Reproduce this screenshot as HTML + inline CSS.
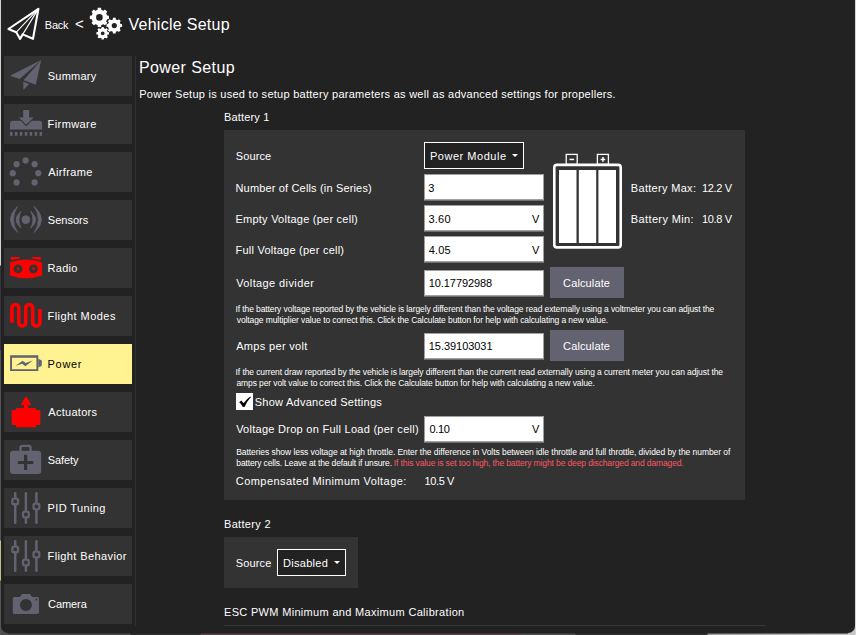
<!DOCTYPE html>
<html><head><meta charset="utf-8"><title>Vehicle Setup - Power</title>
<style>
html,body{margin:0;padding:0;}
body{width:856px;height:635px;overflow:hidden;background:linear-gradient(90deg,#4c4c4c 0,#4c4c4c 130px,#2c2c2c 131px,#2c2c2c 200px,#58464a 201px,#58464a 520px,#505050 521px,#505050 575px,#2c2c2c 576px,#2c2c2c 707px,#9a9a9a 708px,#c4c4c4 850px);position:relative;font:11px/12px "Liberation Sans",sans-serif;color:#fff;}
#edgeL{position:absolute;left:0;top:0;width:1px;height:635px;background:linear-gradient(180deg,#d2d0d2 0,#d2d0d2 265px,#3a3242 266px,#3a3242 350px,#555 351px,#555 540px,#c8c088 541px,#c8c088 580px,#555 581px,#555 635px);}
#edgeR{position:absolute;left:855px;top:0;width:1px;height:635px;background:#d6d6d6;}
#win{position:absolute;left:1px;top:0;width:854px;height:633px;background:#222;border-radius:0 0 7px 7px;overflow:hidden;}
#app{position:absolute;left:-1px;top:0;width:856px;height:635px;}
.t{position:absolute;white-space:pre;line-height:12px;}
.sb{position:absolute;left:4px;width:128px;height:40px;background:#333;}
.sb.sel{background:#fff291;}
.sb svg{position:absolute;left:0;top:0;display:block;}
.abs{position:absolute;}
.panel{position:absolute;background:#333;}
.inp{position:absolute;left:424px;width:118px;height:24px;background:#fff;border:1px solid #a0a0a0;box-shadow:0 1px 0 #707070;}
.combo{position:absolute;box-sizing:border-box;border:1px solid #fff;background:#222;}
.cbtn{position:absolute;left:550px;width:74px;height:31px;background:#626270;}
.arrow{position:absolute;width:0;height:0;border-left:3.3px solid transparent;border-right:3.3px solid transparent;border-top:3.4px solid #fff;}
</style></head><body>
<div id="edgeL"></div><div id="edgeR"></div>
<div id="win"><div id="app">
<!-- header icons -->
<svg class="abs" style="left:0;top:0" width="130" height="48" viewBox="0 0 130 48">
<g fill="none" stroke="#fff" stroke-linejoin="miter">
<path d="M38.4 8.9 L8.4 29 L16.3 32.2 L20.1 38.9 L22.7 34.4 L33 38.8Z" stroke-width="2.1" stroke-linejoin="round"/>
<path d="M38.4 8.9 L16.3 32.2 M38.4 8.9 L22.7 34.4" stroke-width="1.1"/>
</g>
<g fill="#fff" fill-rule="evenodd"><path d="M101.24 25.08 L101.07 26.96 L97.73 26.96 L97.56 25.08 L95.27 24.14 L93.82 25.34 L91.46 22.98 L92.66 21.53 L91.72 19.24 L89.84 19.07 L89.84 15.73 L91.72 15.56 L92.66 13.27 L91.46 11.82 L93.82 9.46 L95.27 10.66 L97.56 9.72 L97.73 7.84 L101.07 7.84 L101.24 9.72 L103.53 10.66 L104.98 9.46 L107.34 11.82 L106.14 13.27 L107.08 15.56 L108.96 15.73 L108.96 19.07 L107.08 19.24 L106.14 21.53 L107.34 22.98 L104.98 25.34 L103.53 24.14Z M96.10 17.40 a3.3 3.3 0 1 0 6.6 0 a3.3 3.3 0 1 0 -6.6 0Z"/><path d="M115.79 31.82 L115.66 33.38 L112.94 33.38 L112.81 31.82 L110.96 31.06 L109.76 32.06 L107.84 30.14 L108.84 28.94 L108.08 27.09 L106.52 26.96 L106.52 24.24 L108.08 24.11 L108.84 22.26 L107.84 21.06 L109.76 19.14 L110.96 20.14 L112.81 19.38 L112.94 17.82 L115.66 17.82 L115.79 19.38 L117.64 20.14 L118.84 19.14 L120.76 21.06 L119.76 22.26 L120.52 24.11 L122.08 24.24 L122.08 26.96 L120.52 27.09 L119.76 28.94 L120.76 30.14 L118.84 32.06 L117.64 31.06Z M111.70 25.60 a2.6 2.6 0 1 0 5.2 0 a2.6 2.6 0 1 0 -5.2 0Z"/><path d="M103.89 38.26 L103.80 39.60 L101.60 39.60 L101.51 38.26 L100.04 37.65 L99.02 38.54 L97.46 36.98 L98.35 35.96 L97.74 34.49 L96.40 34.40 L96.40 32.20 L97.74 32.11 L98.35 30.64 L97.46 29.62 L99.02 28.06 L100.04 28.95 L101.51 28.34 L101.60 27.00 L103.80 27.00 L103.89 28.34 L105.36 28.95 L106.38 28.06 L107.94 29.62 L107.05 30.64 L107.66 32.11 L109.00 32.20 L109.00 34.40 L107.66 34.49 L107.05 35.96 L107.94 36.98 L106.38 38.54 L105.36 37.65Z M100.80 33.30 a1.9 1.9 0 1 0 3.8 0 a1.9 1.9 0 1 0 -3.8 0Z"/></g>
</svg>
<!-- sidebar -->
<div class="sb" style="top:56px"><svg width="44" height="40" viewBox="0 0 44 40"><g fill="#626270"><path d="M6 19.8 L37.2 4.1 L15.7 23Z"/><path d="M37.2 4.1 L19.5 24.3 L31.8 28.7Z"/><path d="M19.2 25.8 L25.2 28 L19.5 33.7Z"/></g></svg></div>
<div class="sb" style="top:104px"><svg width="44" height="40" viewBox="0 0 44 40"><g fill="#626270"><path d="M6 25.5 V19.7 a3 3 0 0 1 3 -3 H16.6 L22.2 22.3 L27.8 16.7 H35.1 a3 3 0 0 1 3 3 V25.5Z"/><path d="M19.2 6 H25.2 V13.4 H29.6 L22.2 20.8 L14.8 13.4 H19.2Z"/><rect x="6.00" y="28" width="2.5" height="3.8"/><rect x="10.93" y="28" width="2.5" height="3.8"/><rect x="15.86" y="28" width="2.5" height="3.8"/><rect x="20.79" y="28" width="2.5" height="3.8"/><rect x="25.72" y="28" width="2.5" height="3.8"/><rect x="30.65" y="28" width="2.5" height="3.8"/><rect x="35.58" y="28" width="2.5" height="3.8"/></g></svg></div>
<div class="sb" style="top:152px"><svg width="44" height="40" viewBox="0 0 44 40"><g fill="#626270"><circle cx="21.6" cy="8.4" r="3.1"/><circle cx="30.6" cy="12.2" r="3.1"/><circle cx="34.3" cy="21.2" r="3.1"/><circle cx="30.6" cy="30.4" r="3.1"/><circle cx="12.6" cy="30.4" r="3.1"/><circle cx="8.8" cy="21.2" r="3.1"/><circle cx="12.6" cy="12.2" r="3.1"/></g></svg></div>
<div class="sb" style="top:200px"><svg width="44" height="40" viewBox="0 0 44 40"><g fill="#626270" stroke="#626270" stroke-width="0.7" stroke-linejoin="round"><circle cx="21.9" cy="19.7" r="4" /><path d="M17.0 11.2 Q7.20 19.65 17.0 28.1 Q12.80 19.65 17.0 11.2Z"/><path d="M13.6 6.4 Q-1.00 19.45 13.6 32.5 Q5.60 19.45 13.6 6.4Z"/><path d="M26.8 11.2 Q36.60 19.65 26.8 28.1 Q31.00 19.65 26.8 11.2Z"/><path d="M30.2 6.4 Q44.80 19.45 30.2 32.5 Q38.20 19.45 30.2 6.4Z"/></g></svg></div>
<div class="sb" style="top:248px"><svg width="44" height="40" viewBox="0 0 44 40"><g fill="#f00"><path d="M6 14.2 Q22 8.6 38.1 14.2 V27.4 Q22 33 6 27.4Z"/><path d="M6.9 9 H15.7 V10.5 Q11 11 6.9 12.2Z"/><path d="M36.7 9 H27.7 V10.5 Q32.5 11 36.7 12.2Z"/><circle cx="14" cy="20.8" r="4.4" fill="#333"/><circle cx="29.4" cy="20.8" r="4.4" fill="#333"/><circle cx="14" cy="20.8" r="1.25"/><circle cx="29.4" cy="20.8" r="1.25"/></g></svg></div>
<div class="sb" style="top:296px"><svg width="44" height="40" viewBox="0 0 44 40"><path fill="none" stroke="#f00" stroke-width="3.6" d="M7.9 26.8 V12 a3.45 3.45 0 0 1 6.9 0 V26.5 a3.45 3.45 0 0 0 6.9 0 V12 a3.5 3.5 0 0 1 7 0 V26.5 a3.6 3.6 0 0 0 7.2 0 V12.9"/></svg></div>
<div class="sb sel" style="top:344px"><svg width="44" height="40" viewBox="0 0 44 40"><g fill="#626270"><path fill-rule="evenodd" d="M6.1 11.2 H34.3 V27 H6.1Z M8 13.7 V25.2 H32.4 V13.7Z"/><path d="M34.3 14.8 L37.8 16.5 V21.7 L34.3 23.4Z"/><path d="M11.7 21.7 L18.6 16.7 L21.7 18.9 L28.7 16.5 L21.4 22.2 L18.3 19.8Z"/></g></svg></div>
<div class="sb" style="top:392px"><svg width="44" height="40" viewBox="0 0 44 40"><g fill="#f00"><rect x="7.6" y="18.1" width="28.8" height="14.8"/><rect x="12" y="16.1" width="20.1" height="19.2"/><rect x="20" y="12" width="4.1" height="5"/><path d="M22 4.8 Q22.9 4.8 23.4 5.9 L27.4 13.2 H16.7 L20.7 5.9 Q21.2 4.8 22 4.8Z"/></g></svg></div>
<div class="sb" style="top:440px"><svg width="44" height="40" viewBox="0 0 44 40"><g><rect x="6" y="10.7" width="31.2" height="23.3" rx="3.2" fill="#626270"/><path d="M16.5 11 V7.9 a2 2 0 0 1 2 -2 H24.6 a2 2 0 0 1 2 2 V11" fill="none" stroke="#626270" stroke-width="2.3"/><rect x="13.9" y="21.1" width="15.4" height="2.9" fill="#333"/><rect x="20" y="14.8" width="3.2" height="15.1" fill="#333"/></g></svg></div>
<div class="sb" style="top:488px"><svg width="44" height="40" viewBox="0 0 44 40"><g stroke="#626270" fill="#333"><line x1="11.2" y1="5.3" x2="11.2" y2="34.7" stroke-width="2.5" stroke-linecap="round"/><rect x="8.35" y="10.55" width="5.7" height="5.7" rx="1.6" stroke-width="2.3"/><line x1="21.9" y1="5.3" x2="21.9" y2="34.7" stroke-width="2.5" stroke-linecap="round"/><rect x="19.049999999999997" y="23.65" width="5.7" height="5.7" rx="1.6" stroke-width="2.3"/><line x1="32.4" y1="5.3" x2="32.4" y2="34.7" stroke-width="2.5" stroke-linecap="round"/><rect x="29.549999999999997" y="15.65" width="5.7" height="5.7" rx="1.6" stroke-width="2.3"/></g></svg></div>
<div class="sb" style="top:536px"><svg width="44" height="40" viewBox="0 0 44 40"><g stroke="#626270" fill="#333"><line x1="11.2" y1="5.3" x2="11.2" y2="34.7" stroke-width="2.5" stroke-linecap="round"/><rect x="8.35" y="10.55" width="5.7" height="5.7" rx="1.6" stroke-width="2.3"/><line x1="21.9" y1="5.3" x2="21.9" y2="34.7" stroke-width="2.5" stroke-linecap="round"/><rect x="19.049999999999997" y="23.65" width="5.7" height="5.7" rx="1.6" stroke-width="2.3"/><line x1="32.4" y1="5.3" x2="32.4" y2="34.7" stroke-width="2.5" stroke-linecap="round"/><rect x="29.549999999999997" y="15.65" width="5.7" height="5.7" rx="1.6" stroke-width="2.3"/></g></svg></div>
<div class="sb" style="top:584px"><svg width="44" height="40" viewBox="0 0 44 40"><g fill="#626270"><rect x="8.8" y="12.9" width="26.2" height="17" rx="1.6"/><path d="M15.4 13.2 L18.3 10 H25.8 L28.6 13.2Z"/><circle cx="21.9" cy="21" r="6" fill="#333"/><circle cx="32.4" cy="15.4" r="1" fill="#333"/></g></svg></div>
<div class="abs" style="left:135px;top:56px;width:1px;height:570px;background:#303030"></div>
<!-- panels -->
<div class="panel" style="left:224px;top:130px;width:521px;height:370px"></div>
<div class="panel" style="left:224px;top:537px;width:134px;height:51px"></div>
<div class="abs" style="left:224px;top:625px;width:542px;height:1px;background:#363636"></div>
<!-- controls -->
<div class="combo" style="left:424px;top:142px;width:100px;height:27px"></div>
<div class="arrow" style="left:511.7px;top:154.2px"></div>
<div class="inp" style="top:174px"></div>
<div class="inp" style="top:205px"></div>
<div class="inp" style="top:236px"></div>
<div class="inp" style="top:270px"></div>
<div class="inp" style="top:333px"></div>
<div class="inp" style="top:416px"></div>
<div class="cbtn" style="top:267px"></div>
<div class="cbtn" style="top:330px"></div>
<div class="combo" style="left:277px;top:549px;width:69px;height:27px"></div>
<div class="arrow" style="left:333.6px;top:561.2px"></div>
<!-- checkbox -->
<div class="abs" style="left:236px;top:393px;width:17px;height:17px;background:#fff"></div>
<svg class="abs" style="left:236px;top:393px" width="17" height="17" viewBox="0 0 17 17"><path d="M3.2 9.2 L5.2 7.6 L7.6 10.2 Q10.6 5.8 14.3 3.4 L14.9 4.1 Q11.2 8.2 8.5 13.9 L7 13.9 Q5.6 11.2 3.2 9.2Z" fill="#000"/></svg>
<!-- battery graphic -->
<svg class="abs" style="left:545px;top:148px" width="85" height="106" viewBox="545 148 85 106">
<rect x="554.3" y="164.9" width="66.4" height="82.5" rx="2.6" fill="none" stroke="#fff" stroke-width="2.6"/>
<rect x="559" y="170" width="17.5" height="73" fill="#fff"/><rect x="578.8" y="170" width="17.4" height="73" fill="#fff"/><rect x="598.4" y="170" width="17.6" height="73" fill="#fff"/>
<rect x="566.2" y="154.4" width="11" height="10" fill="none" stroke="#fff" stroke-width="1.3"/>
<rect x="597.4" y="154.4" width="11" height="10" fill="none" stroke="#fff" stroke-width="1.3"/>
<rect x="569.5" y="158.7" width="4.6" height="1.5" fill="#fff"/>
<rect x="600.6" y="158.7" width="4.6" height="1.5" fill="#fff"/><rect x="602.2" y="157" width="1.5" height="4.8" fill="#fff"/>
</svg>
<!-- texts -->
<span class="t" id="t0" style="left:44.81px;top:19.00px;letter-spacing:-0.213px;">Back</span>
<span class="t" id="t1" style="left:74.64px;top:15.00px;font-size:16px;line-height:17px;transform:scale(0.94,0.97);transform-origin:0 70%;">&lt;</span>
<span class="t" id="t2" style="left:128.43px;top:16.00px;font-size:16px;line-height:17px;letter-spacing:0.283px;">Vehicle Setup</span>
<span class="t" id="t3" style="left:47.82px;top:70.00px;letter-spacing:0.214px;">Summary</span>
<span class="t" id="t4" style="left:47.59px;top:118.00px;letter-spacing:0.414px;">Firmware</span>
<span class="t" id="t5" style="left:48.30px;top:166.00px;letter-spacing:0.353px;">Airframe</span>
<span class="t" id="t6" style="left:47.82px;top:214.00px;letter-spacing:0.014px;">Sensors</span>
<span class="t" id="t7" style="left:47.59px;top:262.00px;letter-spacing:0.252px;">Radio</span>
<span class="t" id="t8" style="left:47.59px;top:310.00px;letter-spacing:0.440px;">Flight Modes</span>
<span class="t" id="t9" style="left:47.58px;top:358.00px;letter-spacing:0.676px;color:#000;">Power</span>
<span class="t" id="t10" style="left:48.30px;top:406.00px;letter-spacing:0.280px;">Actuators</span>
<span class="t" id="t11" style="left:47.81px;top:454.00px;letter-spacing:-0.085px;">Safety</span>
<span class="t" id="t12" style="left:47.59px;top:502.00px;letter-spacing:0.369px;">PID Tuning</span>
<span class="t" id="t13" style="left:47.59px;top:550.00px;letter-spacing:0.388px;">Flight Behavior</span>
<span class="t" id="t14" style="left:48.00px;top:598.00px;letter-spacing:-0.068px;">Camera</span>
<span class="t" id="t15" style="left:138.88px;top:59.00px;font-size:16px;line-height:17px;letter-spacing:0.420px;">Power Setup</span>
<span class="t" id="t16" style="left:139.26px;top:88.00px;letter-spacing:0.269px;">Power Setup is used to setup battery parameters as well as advanced settings for propellers.</span>
<span class="t" id="t17" style="left:223.98px;top:111.00px;letter-spacing:0.159px;">Battery 1</span>
<span class="t" id="t18" style="left:235.79px;top:150.00px;letter-spacing:0.105px;">Source</span>
<span class="t" id="t19" style="left:235.50px;top:182.00px;letter-spacing:0.161px;">Number of Cells (in Series)</span>
<span class="t" id="t20" style="left:235.48px;top:213.00px;letter-spacing:0.239px;">Empty Voltage (per cell)</span>
<span class="t" id="t21" style="left:235.48px;top:244.00px;letter-spacing:0.238px;">Full Voltage (per cell)</span>
<span class="t" id="t22" style="left:236.17px;top:277.00px;letter-spacing:0.397px;">Voltage divider</span>
<span class="t" id="t23" style="left:236.19px;top:340.00px;letter-spacing:0.326px;">Amps per volt</span>
<span class="t" id="t24" style="left:254.77px;top:396.00px;letter-spacing:0.253px;">Show Advanced Settings</span>
<span class="t" id="t25" style="left:236.13px;top:423.00px;letter-spacing:0.270px;">Voltage Drop on Full Load (per cell)</span>
<span class="t" id="t26" style="left:235.86px;top:474.50px;letter-spacing:0.424px;">Compensated Minimum Voltage:</span>
<span class="t" id="t27" style="left:424.45px;top:474.50px;letter-spacing:-0.357px;">10.5 V</span>
<span class="t" id="t28" style="left:223.98px;top:518.00px;letter-spacing:0.321px;">Battery 2</span>
<span class="t" id="t29" style="left:235.82px;top:557.00px;letter-spacing:0.125px;">Source</span>
<span class="t" id="t30" style="left:223.98px;top:606.00px;letter-spacing:0.322px;">ESC PWM Minimum and Maximum Calibration</span>
<span class="t" id="t31" style="left:429.98px;top:150.00px;letter-spacing:0.527px;">Power Module</span>
<span class="t" id="t32" style="left:282.99px;top:557.00px;letter-spacing:0.287px;">Disabled</span>
<span class="t" id="t33" style="left:428.18px;top:182.00px;letter-spacing:2.401px;color:#000;">3</span>
<span class="t" id="t34" style="left:428.44px;top:213.00px;letter-spacing:0.234px;color:#000;">3.60</span>
<span class="t" id="t35" style="left:428.79px;top:244.00px;letter-spacing:0.136px;color:#000;">4.05</span>
<span class="t" id="t36" style="left:428.81px;top:277.00px;letter-spacing:-0.086px;color:#000;">10.17792988</span>
<span class="t" id="t37" style="left:428.80px;top:340.00px;letter-spacing:-0.050px;color:#000;">15.39103031</span>
<span class="t" id="t38" style="left:429.58px;top:423.00px;letter-spacing:-0.408px;color:#000;">0.10</span>
<span class="t" id="t39" style="left:532.03px;top:213.00px;letter-spacing:-1.288px;color:#000;">V</span>
<span class="t" id="t40" style="left:532.03px;top:244.00px;letter-spacing:-1.288px;color:#000;">V</span>
<span class="t" id="t41" style="left:532.03px;top:423.00px;letter-spacing:-1.288px;color:#000;">V</span>
<span class="t" id="t42" style="left:630.82px;top:182.00px;letter-spacing:0.309px;">Battery Max:</span>
<span class="t" id="t43" style="left:701.99px;top:182.00px;letter-spacing:-0.330px;">12.2 V</span>
<span class="t" id="t44" style="left:630.82px;top:213.00px;letter-spacing:0.375px;">Battery Min:</span>
<span class="t" id="t45" style="left:701.99px;top:213.00px;letter-spacing:-0.330px;">10.8 V</span>
<span class="t" id="t46" style="left:563.11px;top:277.00px;letter-spacing:0.119px;">Calculate</span>
<span class="t" id="t47" style="left:563.11px;top:340.00px;letter-spacing:0.119px;">Calculate</span>
<span class="t" id="t48" style="left:235.54px;top:304.00px;font-size:8.5px;line-height:10px;letter-spacing:-0.109px;">If the battery voltage reported by the vehicle is largely different than the voltage read externally using a voltmeter you can adjust the</span>
<span class="t" id="t49" style="left:236.78px;top:315.00px;font-size:8.5px;line-height:10px;letter-spacing:-0.098px;">voltage multiplier value to correct this. Click the Calculate button for help with calculating a new value.</span>
<span class="t" id="t50" style="left:235.57px;top:367.00px;font-size:8.5px;line-height:10px;letter-spacing:-0.089px;">If the current draw reported by the vehicle is largely different than the current read externally using a current meter you can adjust the</span>
<span class="t" id="t51" style="left:236.43px;top:378.00px;font-size:8.5px;line-height:10px;letter-spacing:-0.105px;">amps per volt value to correct this. Click the Calculate button for help with calculating a new value.</span>
<span class="t" id="t52" style="left:236.14px;top:447.00px;font-size:8.5px;line-height:10px;letter-spacing:-0.056px;">Batteries show less voltage at high throttle. Enter the difference in Volts between idle throttle and full throttle, divided by the number of</span>
<span class="t" id="t53" style="left:236.32px;top:458.00px;font-size:8.5px;line-height:10px;letter-spacing:-0.142px;">battery cells. Leave at the default if unsure.</span>
<span class="t" id="t54" style="left:393.87px;top:458.00px;font-size:8.5px;line-height:10px;letter-spacing:-0.123px;color:#f85761;">If this value is set too high, the battery might be deep discharged and damaged.</span>
</div></div>
<div class="abs" style="left:8px;top:633px;width:840px;height:1px;background:rgba(34,34,34,.55)"></div>
</body></html>
